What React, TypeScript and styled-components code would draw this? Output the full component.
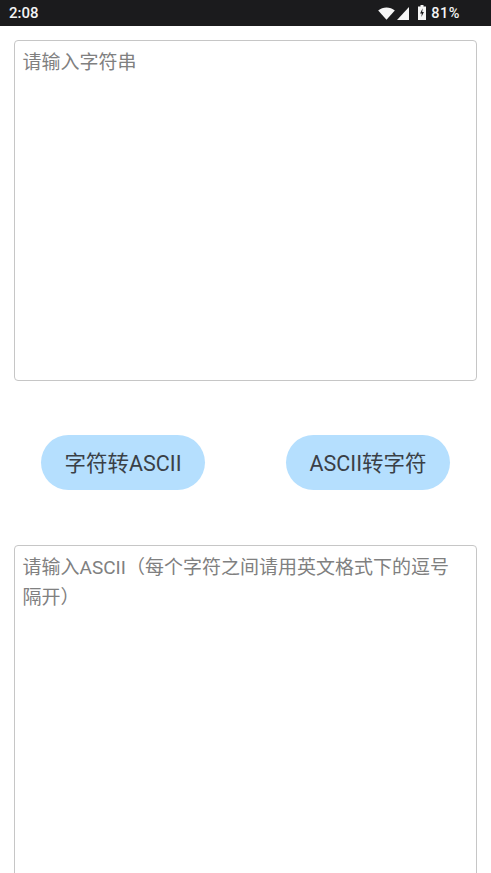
import React from "react";
import styled, { createGlobalStyle } from "styled-components";

const Global = createGlobalStyle`
  html, body { margin: 0; padding: 0; background: #fff; height: 100%; overflow: hidden; }
  #root { height: 873px; overflow: hidden; }
  * { box-sizing: border-box; }
`;

const Screen = styled.div`
  width: 491px;
  height: 873px;
  overflow: hidden;
  display: flex;
  flex-direction: column;
  font-family: Roboto, "Noto Sans CJK SC", sans-serif;
`;

const StatusBar = styled.div`
  flex: none;
  height: 26px;
  background: #1b1b1d;
  color: #f4f4f4;
  display: flex;
  align-items: center;
  justify-content: space-between;
  padding: 0 31px 0 9px;
  font-size: 15px;
  font-weight: 500;
`;

const StatusRight = styled.div`
  display: flex;
  align-items: center;
`;

const WifiIcon = styled.svg`
  display: block;
  margin: 1px 2px 0 0;
`;

const SignalIcon = styled.svg`
  display: block;
  margin: 0 9px 0 0;
`;

const BatteryIcon = styled.svg`
  display: block;
  margin: -1px 5px 0 0;
`;

const Percent = styled.span`
  font-size: 14.5px;
  letter-spacing: 0.5px;
`;

const Content = styled.main`
  flex: none;
  display: flex;
  flex-direction: column;
  padding: 14px 14px 0;
`;

const Field = styled.textarea<{ $height: number }>`
  display: block;
  width: 463px;
  height: ${(p) => p.$height}px;
  flex: none;
  resize: none;
  border: 1px solid #c6c6c6;
  border-radius: 4px;
  background: #fff;
  padding: 7px 24px 6px 7.5px;
  font-family: Roboto, "Noto Sans CJK SC", sans-serif;
  font-size: 19px;
  line-height: 30px;
  color: #333;
  outline: none;
  &::placeholder { color: #808080; opacity: 1; }
`;

const ButtonRow = styled.div`
  display: flex;
  justify-content: space-between;
  padding: 54px 27px 55px 27px;
`;

const Pill = styled.button`
  width: 164px;
  height: 55px;
  border: none;
  border-radius: 28px;
  background: #b5dffe;
  color: #3a4046;
  font-family: Roboto, "Noto Sans CJK SC", sans-serif;
  font-size: 21.5px;
  padding: 0 0 2px;
`;

export default function App() {
  return (
    <Screen>
      <Global />
      <StatusBar>
        <span>2:08</span>
        <StatusRight>
          <WifiIcon width="17" height="13" viewBox="0 0 17 13" aria-hidden="true">
            <path d="M0.2 3.4C2.6 1.3 5.4 0.4 8.5 0.4s5.9 0.9 8.3 3L8.5 12.8z" fill="#f6f6f6" />
          </WifiIcon>
          <SignalIcon width="12" height="13" viewBox="0 0 12 13" aria-hidden="true">
            <path d="M12 0v13H0z" fill="#f6f6f6" />
          </SignalIcon>
          <BatteryIcon width="8" height="15" viewBox="0 0 8 15" aria-hidden="true">
            <path d="M2.5 0h3v1.5H8V15H0V1.5h2.5z" fill="#f6f6f6" />
            <path d="M4.6 3.2 2.1 8.4h1.7l-.4 3.6 2.5-5.1H4.2z" fill="#1b1b1d" />
          </BatteryIcon>
          <Percent>81%</Percent>
        </StatusRight>
      </StatusBar>
      <Content>
        <Field $height={341} placeholder="请输入字符串" />
        <ButtonRow>
          <Pill>字符转ASCII</Pill>
          <Pill>ASCII转字符</Pill>
        </ButtonRow>
        <Field $height={360} placeholder="请输入ASCII（每个字符之间请用英文格式下的逗号隔开）" />
      </Content>
    </Screen>
  );
}
